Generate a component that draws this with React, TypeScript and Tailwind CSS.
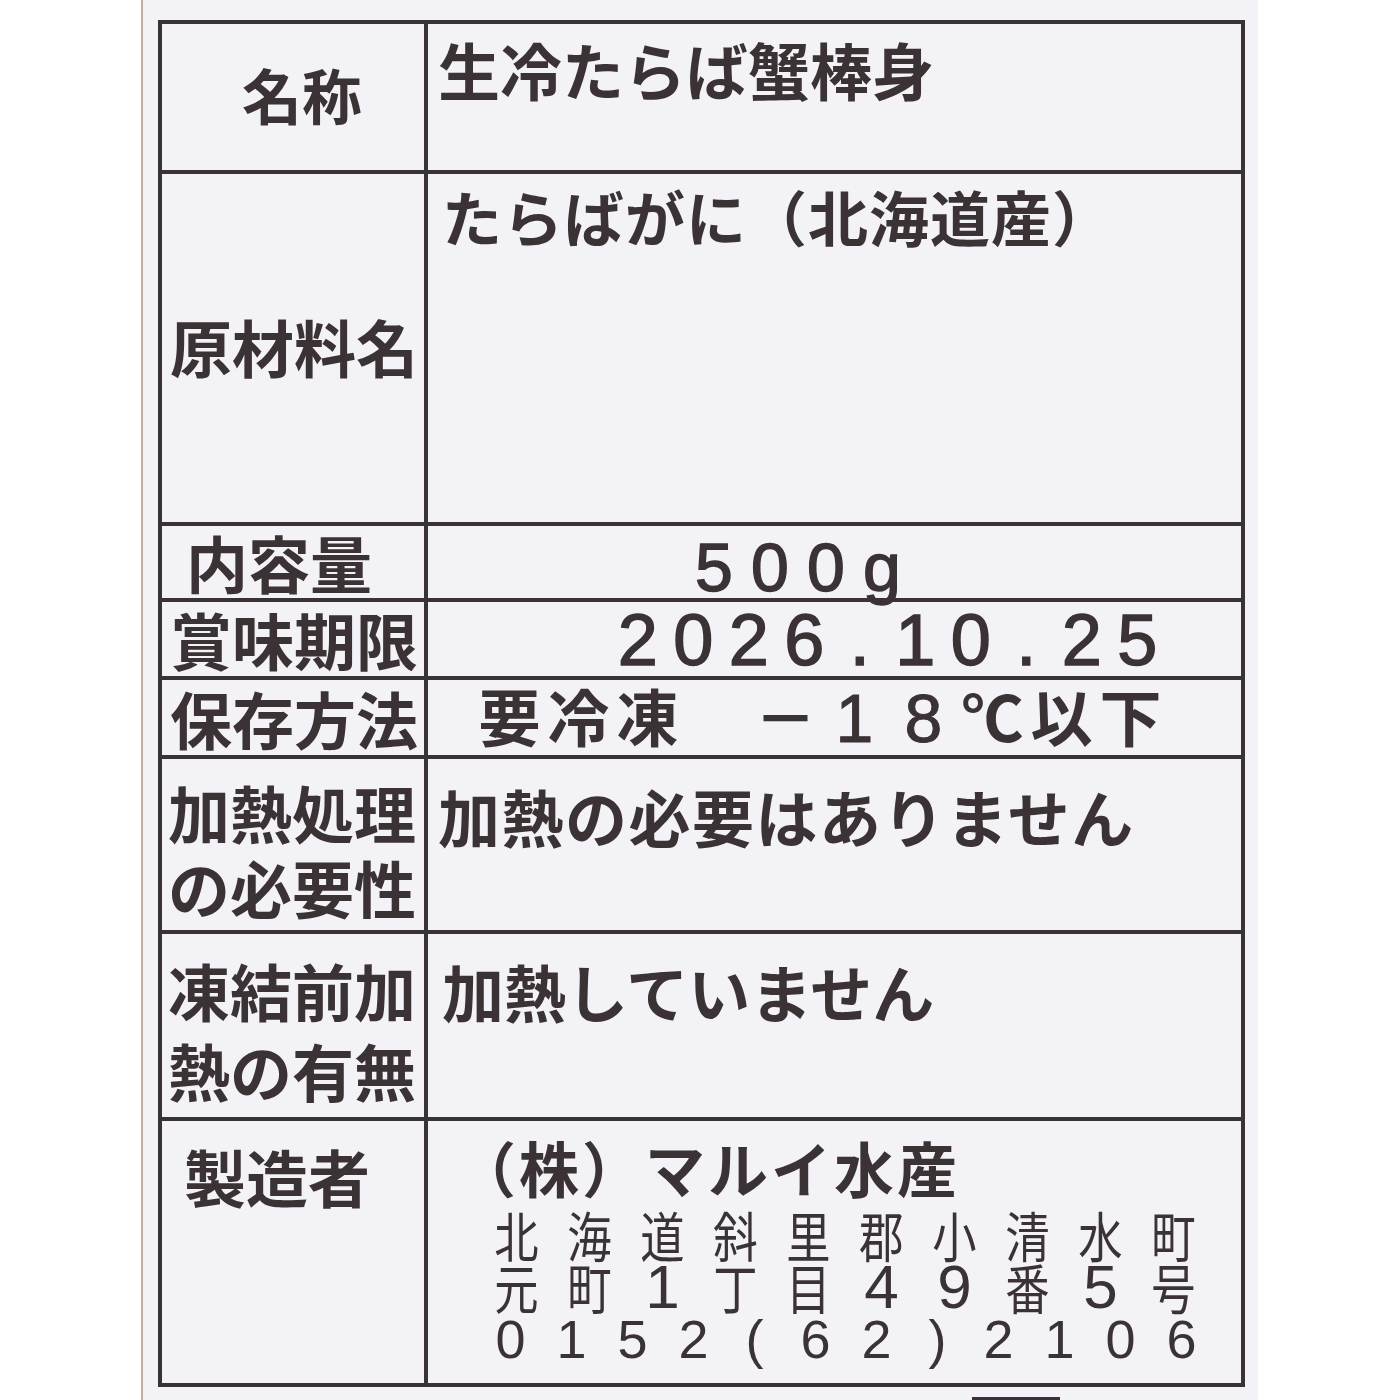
import React from 'react'

// thermal-print product label (生冷たらば蟹棒身)

const cjk = "font-['Noto_Sans_CJK_JP',sans-serif]"

function Cells({ text, cell, latin, wide }: { text: string; cell: string; latin: string; wide: string }) {
  return (
    <span className="inline-flex">
      {Array.from(text).map((ch, i) => (
        <span key={i} className={`${cell} inline-flex justify-center ${/[\x20-\x7e]/.test(ch) ? latin : wide}`}>
          {ch}
        </span>
      ))}
    </span>
  )
}

function Row({ h, last, left, right }: { h: string; last?: boolean; left: React.ReactNode; right: React.ReactNode }) {
  return (
    <div className={`${h} flex ${last ? '' : 'border-b-4 border-[#3b3235]'}`}>
      {left}
      {right}
    </div>
  )
}

export default function App() {
  return (
    <div className={`h-[1400px] w-[1400px] overflow-hidden bg-white flex text-[#3b3235] ${cjk}`}>
      <div className="w-[141px] shrink-0" />
      <div className="w-[1117px] shrink-0 h-full bg-[#f3f2f7] border-l-2 border-[#c4ada2] pl-[15px] pt-[20px] flex flex-col">
        <div className="w-[1087px] border-4 border-[#3b3235] flex flex-col">
          {/* 名称 */}
          <Row
            h="h-[150px]"
            left={
              <div className="w-[266px] shrink-0 border-r-4 border-[#3b3235] flex items-center pl-[80px] pb-[6px] text-[60px] font-bold leading-none">
                名称
              </div>
            }
            right={<div className="flex-1 pl-[10px] pt-[14px] text-[62px] font-bold leading-none">生冷たらば蟹棒身</div>}
          />
          {/* 原材料名 */}
          <Row
            h="h-[352px]"
            left={
              <div className="w-[266px] shrink-0 border-r-4 border-[#3b3235] flex items-center pl-[8px] pb-[4px] text-[62px] font-bold leading-none">
                原材料名
              </div>
            }
            right={<div className="flex-1 pl-[14px] pt-[12px] text-[60px] font-bold leading-none tracking-[1px]">たらばがに（北海道産）</div>}
          />
          {/* 内容量 */}
          <Row
            h="h-[76px]"
            left={
              <div className="w-[266px] shrink-0 border-r-4 border-[#3b3235] flex items-center pl-[24px] text-[62px] font-bold leading-none">
                内容量
              </div>
            }
            right={
              <div className="flex-1 flex items-center pl-[258px] pt-[10px] leading-none">
                <Cells
                  text="500g"
                  cell="w-[56px]"
                  latin="font-['Liberation_Sans',sans-serif] text-[68px] [-webkit-text-stroke:1.5px_#3b3235]"
                  wide="text-[60px] font-bold"
                />
              </div>
            }
          />
          {/* 賞味期限 */}
          <Row
            h="h-[78px]"
            left={
              <div className="w-[266px] shrink-0 border-r-4 border-[#3b3235] flex items-center pl-[8px] text-[62px] font-bold leading-none">
                賞味期限
              </div>
            }
            right={
              <div className="flex-1 flex items-center pl-[182px] pt-[2px] leading-none">
                <Cells
                  text="2026.10.25"
                  cell="w-[55.5px]"
                  latin="font-['Liberation_Sans',sans-serif] text-[72px] [-webkit-text-stroke:1.5px_#3b3235]"
                  wide="text-[60px] font-bold"
                />
              </div>
            }
          />
          {/* 保存方法 */}
          <Row
            h="h-[79px]"
            left={
              <div className="w-[266px] shrink-0 border-r-4 border-[#3b3235] flex items-center pl-[8px] text-[62px] font-bold leading-none">
                保存方法
              </div>
            }
            right={
              <div className="flex-1 flex items-center pl-[47px] leading-none">
                <Cells
                  text="要冷凍　－18℃以下"
                  cell="w-[69px]"
                  latin="font-['Liberation_Sans',sans-serif] text-[68px] [-webkit-text-stroke:1px_#3b3235]"
                  wide="text-[62px] font-bold"
                />
              </div>
            }
          />
          {/* 加熱処理の必要性 */}
          <Row
            h="h-[175px]"
            left={
              <div className="w-[266px] shrink-0 border-r-4 border-[#3b3235] flex flex-col justify-center pl-[6px] pt-[10px] text-[62px] font-bold leading-[75px]">
                <span>加熱処理</span>
                <span>の必要性</span>
              </div>
            }
            right={<div className="flex-1 pl-[10px] pt-[26px] text-[62px] font-bold leading-none tracking-[1.5px]">加熱の必要はありません</div>}
          />
          {/* 凍結前加熱の有無 */}
          <Row
            h="h-[187px]"
            left={
              <div className="w-[266px] shrink-0 border-r-4 border-[#3b3235] flex flex-col justify-center pl-[6px] pt-[8px] text-[62px] font-bold leading-[80px]">
                <span>凍結前加</span>
                <span>熱の有無</span>
              </div>
            }
            right={<div className="flex-1 pl-[14px] pt-[26px] text-[62px] font-bold leading-none">加熱していません</div>}
          />
          {/* 製造者 */}
          <Row
            h="h-[262px]"
            last
            left={
              <div className="w-[266px] shrink-0 border-r-4 border-[#3b3235] pl-[22px] pt-[24px] text-[62px] font-bold leading-none">
                製造者
              </div>
            }
            right={
              <div className="flex-1 flex flex-col pl-[52px] pt-[16px]">
                <div className="ml-[-24px] text-[60px] font-bold leading-none tracking-[3px]">（株）マルイ水産</div>
                <div className="mt-[12px] flex flex-col leading-[52px]">
                  <Cells
                    text="北海道斜里郡小清水町"
                    cell="w-[73px]"
                    latin="font-['Liberation_Sans',sans-serif] text-[56px]"
                    wide="text-[54px] font-normal scale-x-[0.82]"
                  />
                  <Cells
                    text="元町1丁目49番5号"
                    cell="w-[73px]"
                    latin="font-['Liberation_Sans',sans-serif] text-[62px]"
                    wide="text-[54px] font-normal scale-x-[0.82]"
                  />
                  <Cells
                    text="0152(62)2106"
                    cell="w-[61px]"
                    latin="font-['Liberation_Sans',sans-serif] text-[54px]"
                    wide="text-[54px] font-normal"
                  />
                </div>
              </div>
            }
          />
        </div>
        <div className="ml-[814px] mt-[10px] h-[4px] w-[88px] bg-[#3b3235]" />
      </div>
    </div>
  )
}
